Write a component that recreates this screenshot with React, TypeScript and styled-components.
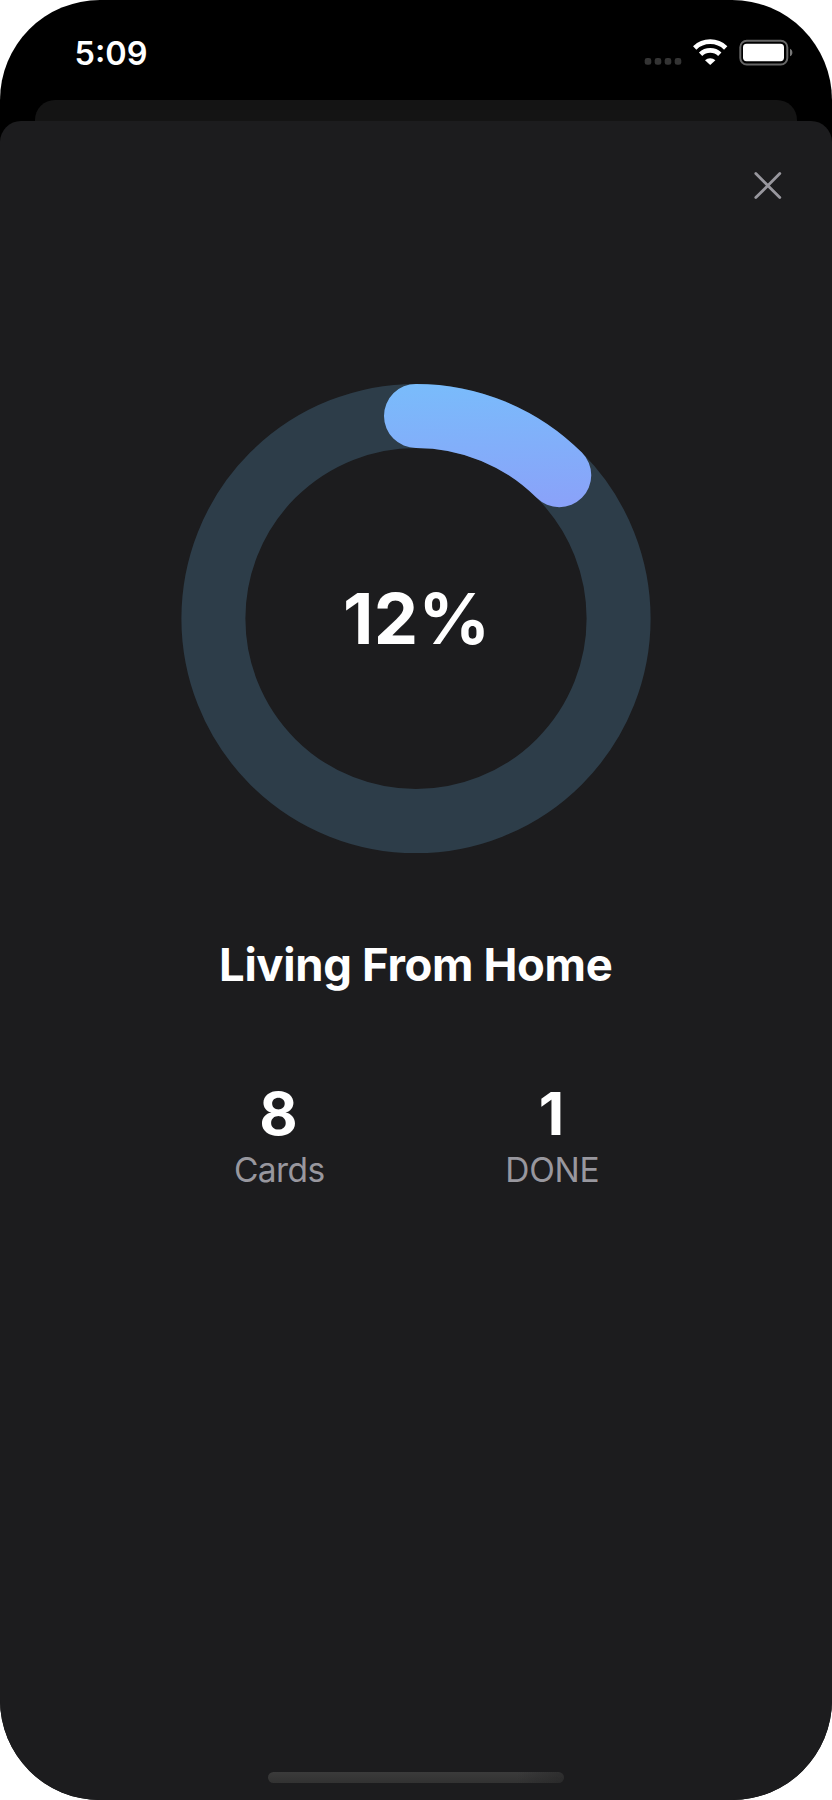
import React from 'react';
import styled, { createGlobalStyle } from 'styled-components';

const GlobalStyle = createGlobalStyle`
  * { box-sizing: border-box; }
  body { margin: 0; background: #fff; font-family: Inter, "Liberation Sans", sans-serif; }
`;

const Phone = styled.main`
  display: flex;
  flex-direction: column;
  width: 831.5px;
  height: 1799.5px;
  background: #000;
  border-radius: 100px;
  overflow: hidden;
`;

const StatusBar = styled.header`
  display: flex;
  flex: none;
  justify-content: space-between;
  height: 100px;
  padding: 34px 38px 0 74.5px;
`;

const Time = styled.time`
  font-size: 32.5px;
  line-height: 39px;
  font-weight: 560;
  letter-spacing: 0;
  color: #fff;
`;

const StatusIcons = styled.svg`
  display: block;
  width: 154px;
  height: 36px;
`;

const PreviousSheet = styled.div`
  flex: none;
  height: 21.3px;
  margin: 0 34.5px;
  border-radius: 20px 20px 0 0;
  background: #141414;
`;

const Sheet = styled.section`
  flex: 1;
  display: flex;
  flex-direction: column;
  align-items: center;
  border-radius: 21px 21px 0 0;
  background: #1c1c1e;
`;

const CloseButton = styled.button`
  align-self: flex-end;
  display: flex;
  margin: 50.7px 50px 0 0;
  padding: 0;
  border: 0;
  background: none;
`;

const RingBox = styled.div`
  display: grid;
  place-items: center;
  width: 470px;
  height: 470px;
  margin-top: 183.3px;
  > * { grid-area: 1 / 1; }
`;

const Percent = styled.strong`
  padding: 0 0 0 2px;
  font-size: 70.5px;
  line-height: 86px;
  font-weight: 700;
  letter-spacing: 0.4px;
  color: #fff;
`;

const Title = styled.h1`
  margin: 83.4px 0 0;
  font-size: 45.4px;
  line-height: 56px;
  font-weight: 700;
  letter-spacing: -0.32px;
  color: #fff;
`;

const Stats = styled.div`
  display: flex;
  gap: 136px;
  margin-top: 89.6px;
`;

const Stat = styled.div`
  width: 137px;
  text-align: center;
`;

const StatValue = styled.div`
  margin-right: 1.4px;
  font-size: 59px;
  line-height: 64px;
  font-weight: 700;
  color: #fff;
`;

const StatLabel = styled.div<{ $spacing: number }>`
  font-size: 33.5px;
  line-height: 42px;
  margin-top: 2.6px;
  letter-spacing: ${(p) => p.$spacing}px;
  color: #98979e;
`;

const HomeIndicator = styled.div`
  width: 296.5px;
  height: 11px;
  margin: auto 0 16.5px 0.5px;
  border-radius: 6px;
  background:
    linear-gradient(90deg, transparent 84%, rgba(28, 28, 30, 0.4)),
    linear-gradient(#3b3b3b, #323232);
`;

function ProgressRing({ value }: { value: number }) {
  const r = 202.6;
  const cy = 235.5;
  const a = value * Math.PI * 2;
  const x = 235 + r * Math.sin(a);
  const y = cy - r * Math.cos(a);
  return (
    <svg width="470" height="471" viewBox="0 0 470 471" fill="none">
      <defs>
        <linearGradient id="arc" gradientUnits="userSpaceOnUse" x1="235" y1="0" x2="239" y2="126">
          <stop offset="0" stopColor="#79bcfb" />
          <stop offset="1" stopColor="#8aa2f9" />
        </linearGradient>
      </defs>
      <circle cx="235" cy={cy} r={r} stroke="#2d3d49" strokeWidth="64" />
      <path
        d={`M235 ${cy - r}A${r} ${r} 0 0 1 ${x} ${y}`}
        stroke="url(#arc)"
        strokeWidth="64"
        strokeLinecap="round"
      />
    </svg>
  );
}

export default function App() {
  return (
    <>
      <GlobalStyle />
      <Phone>
        <StatusBar>
          <Time>5:09</Time>
          <StatusIcons viewBox="640 34 154 36" fill="none">
            <g fill="#343434">
              <rect x="644.7" y="58" width="6.6" height="6.8" rx="2.4" />
              <rect x="654.7" y="58" width="6.6" height="6.8" rx="2.4" />
              <rect x="664.7" y="58" width="6.6" height="6.8" rx="2.4" />
              <rect x="674.7" y="58" width="6.6" height="6.8" rx="2.4" />
            </g>
            <g stroke="#fff" strokeWidth="4.8">
              <path d="M694.7 47.9A22.5 22.5 0 0 1 725.7 47.9" />
              <path d="M700.6 54.2A14 14 0 0 1 719.8 54.2" />
            </g>
            <path d="M705 60.2A7.6 7.6 0 0 1 715.4 60.2L710.2 65Z" fill="#fff" />
            <rect x="740.3" y="40.7" width="47" height="23.8" rx="6.5" stroke="#666" strokeWidth="2" />
            <rect x="743" y="43.8" width="41" height="17.4" rx="3.6" fill="#fff" />
            <path d="M790 48.7C793.2 50 793.2 55 790 56.3Z" fill="#777" />
          </StatusIcons>
        </StatusBar>
        <PreviousSheet />
        <Sheet>
          <CloseButton aria-label="Close">
            <svg width="28" height="28" viewBox="0 0 28 28" stroke="#98979e" strokeWidth="2.8" strokeLinecap="round">
              <path d="M1.8 1.6L25.8 25.6M25.8 1.6L1.8 25.6" />
            </svg>
          </CloseButton>
          <RingBox>
            <ProgressRing value={0.125} />
            <Percent>12%</Percent>
          </RingBox>
          <Title>Living From Home</Title>
          <Stats>
            <Stat>
              <StatValue>8</StatValue>
              <StatLabel $spacing={-0.6}>Cards</StatLabel>
            </Stat>
            <Stat>
              <StatValue>1</StatValue>
              <StatLabel $spacing={-0.3}>DONE</StatLabel>
            </Stat>
          </Stats>
          <HomeIndicator />
        </Sheet>
      </Phone>
    </>
  );
}
